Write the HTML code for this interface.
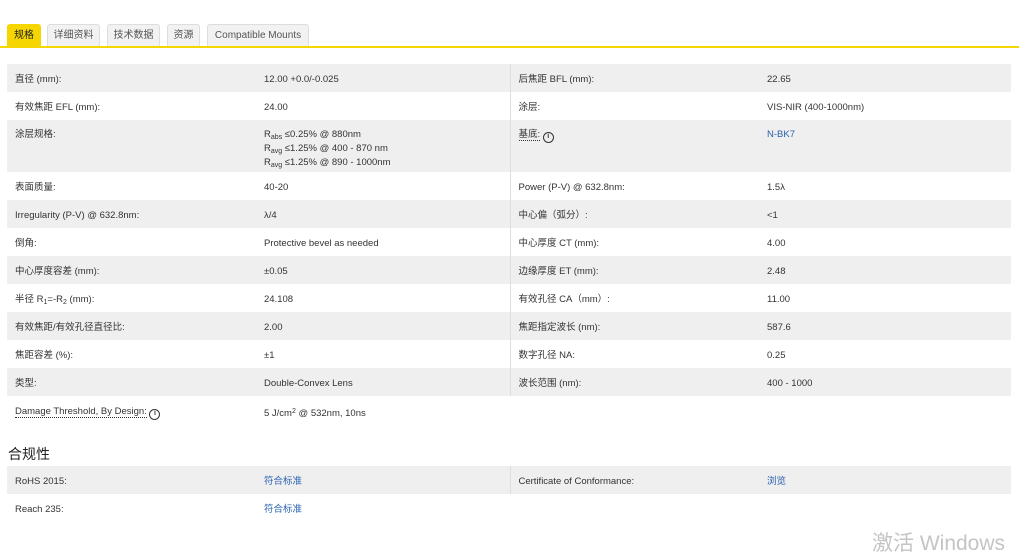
<!DOCTYPE html>
<html><head><meta charset="utf-8">
<style>
*{margin:0;padding:0;box-sizing:border-box}
body{width:1019px;height:537px;overflow:hidden;background:#fff;font-family:"Liberation Sans","Noto Sans CJK SC",sans-serif;font-size:9.5px;color:#333;position:relative}
.tabs{position:absolute;left:0;top:0;width:1019px;height:48px;border-bottom:2px solid #f6d600}
.tab{position:absolute;top:24px;height:22px;border:1px solid #ddd;border-bottom:none;background:#f2f2f2;color:#555;font-size:10px;line-height:22px;text-align:center;border-radius:3px 3px 0 0}
.tab.on{background:#f6d600;border-color:#f6d600;color:#222}
table{position:absolute;left:7px;border-collapse:collapse;width:1004px;table-layout:fixed}
td{height:28px;vertical-align:top;padding-top:10px;line-height:11px}
tr:nth-child(odd) td{background:#efefef}
td.a{width:250px;padding-left:8px}
td.b{width:253px;padding-left:7px;border-right:1px solid #ddd}
td.c{width:250px;padding-left:8px}
td.d{padding-left:7px}
.blue{color:#2a62b0}
sub{font-size:7px;vertical-align:-2px}
sup{font-size:7px;vertical-align:3px}
.u{border-bottom:1px dotted #333}
.i{display:inline-block;width:11px;height:11px;border:1.5px solid #333;border-radius:50%;font-size:7px;line-height:8px;text-align:center;font-weight:bold;vertical-align:-1px}
h2{position:absolute;left:8px;top:444px;font-size:14px;font-weight:normal;color:#222}
.wm{position:absolute;left:872px;top:527px;font-size:21px;color:#c4c4c4;font-family:"Liberation Sans","Noto Sans CJK SC",sans-serif}
</style></head><body>
<div class="tabs">
<div class="tab on" style="left:7px;width:34px">规格</div>
<div class="tab" style="left:47px;width:53px">详细资料</div>
<div class="tab" style="left:107px;width:53px">技术数据</div>
<div class="tab" style="left:167px;width:33px">资源</div>
<div class="tab" style="left:207px;width:102px">Compatible Mounts</div>
</div>
<table style="top:64px">
<colgroup><col style="width:250px"><col style="width:253px"><col style="width:250px"><col></colgroup>
<tr><td class="a">直径 (mm):</td><td class="b">12.00 +0.0/-0.025</td><td class="c">后焦距 BFL (mm):</td><td class="d">22.65</td></tr>
<tr><td class="a">有效焦距 EFL (mm):</td><td class="b">24.00</td><td class="c">涂层:</td><td class="d">VIS-NIR (400-1000nm)</td></tr>
<tr><td class="a" style="height:52px;padding-top:9px">涂层规格:</td><td class="b" style="padding-top:9px">R<sub>abs</sub> ≤0.25% @ 880nm<br>R<sub>avg</sub> ≤1.25% @ 400 - 870 nm<br>R<sub>avg</sub> ≤1.25% @ 890 - 1000nm</td><td class="c" style="padding-top:9px"><span class="u">基底:</span> <span class="i">i</span></td><td class="d blue" style="padding-top:9px">N-BK7</td></tr>
<tr><td class="a">表面质量:</td><td class="b">40-20</td><td class="c">Power (P-V) @ 632.8nm:</td><td class="d">1.5λ</td></tr>
<tr><td class="a">Irregularity (P-V) @ 632.8nm:</td><td class="b">λ/4</td><td class="c">中心偏（弧分）:</td><td class="d">&lt;1</td></tr>
<tr><td class="a">倒角:</td><td class="b">Protective bevel as needed</td><td class="c">中心厚度 CT (mm):</td><td class="d">4.00</td></tr>
<tr><td class="a">中心厚度容差 (mm):</td><td class="b">±0.05</td><td class="c">边缘厚度 ET (mm):</td><td class="d">2.48</td></tr>
<tr><td class="a">半径 R<sub>1</sub>=-R<sub>2</sub> (mm):</td><td class="b">24.108</td><td class="c">有效孔径 CA（mm）:</td><td class="d">11.00</td></tr>
<tr><td class="a">有效焦距/有效孔径直径比:</td><td class="b">2.00</td><td class="c">焦距指定波长 (nm):</td><td class="d">587.6</td></tr>
<tr><td class="a">焦距容差 (%):</td><td class="b">±1</td><td class="c">数字孔径 NA:</td><td class="d">0.25</td></tr>
<tr><td class="a">类型:</td><td class="b">Double-Convex Lens</td><td class="c">波长范围 (nm):</td><td class="d">400 - 1000</td></tr>
<tr><td class="a" style="background:#fff"><span class="u">Damage Threshold, By Design:</span> <span class="i">i</span></td><td class="b" style="background:#fff;border:none">5 J/cm<sup>2</sup> @ 532nm, 10ns</td><td class="c" style="background:#fff"></td><td class="d" style="background:#fff"></td></tr>
</table>
<h2>合规性</h2>
<table style="top:466px">
<colgroup><col style="width:250px"><col style="width:253px"><col style="width:250px"><col></colgroup>
<tr><td class="a">RoHS 2015:</td><td class="b blue">符合标准</td><td class="c">Certificate of Conformance:</td><td class="d blue">浏览</td></tr>
<tr><td class="a" style="background:#fff">Reach 235:</td><td class="b blue" style="background:#fff;border:none">符合标准</td><td style="background:#fff"></td><td style="background:#fff"></td></tr>
</table>
<div class="wm">激活 Windows</div>
</body></html>
